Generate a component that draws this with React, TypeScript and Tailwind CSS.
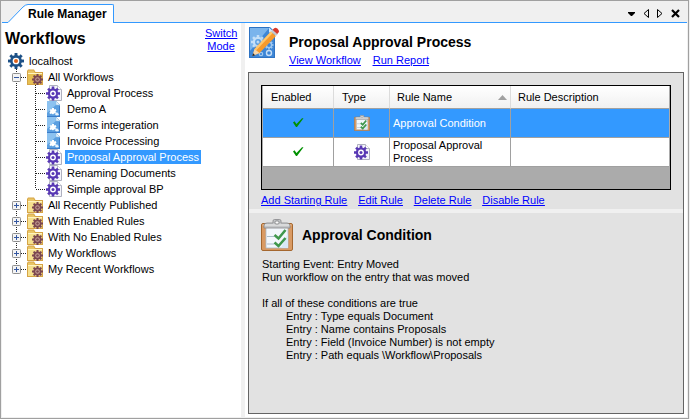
import { useState, type ReactNode } from "react";

const TEETH = [0, 45, 90, 135, 180, 225, 270, 315];

function Gear({ cx, cy, r, color, hub }: { cx: number; cy: number; r: number; color: string; hub: string }) {
  return (
    <g>
      {TEETH.map((a) => (
        <rect key={a} x={cx - r * 0.18} y={cy - r} width={r * 0.36} height={r * 0.5} fill={color} transform={`rotate(${a} ${cx} ${cy})`} />
      ))}
      <circle cx={cx} cy={cy} r={r * 0.58} fill={hub} stroke={color} strokeWidth={r * 0.32} />
    </g>
  );
}

function HostIcon() {
  return (
    <svg className="h-4 w-4 shrink-0" viewBox="0 0 16 16" aria-hidden="true">
      <Gear cx={8} cy={8} r={8} color="#1d5187" hub="#ffffff" />
      <circle cx="8" cy="8" r="2" fill="#e0641c" />
    </svg>
  );
}

function FolderIcon({ open = false }: { open?: boolean }) {
  return (
    <svg className="h-4 w-4 shrink-0" viewBox="0 0 16 16" aria-hidden="true">
      <path d="M0 16V2L1 .5h6L8.500 3H16v13z" fill="#d6a445" />
      <path d="M1 2l.500-.5h5L8 4h7v1H1z" fill="#e9c566" />
      <path d="M1 5h14v10H1z" fill={open ? "#e6bf52" : "#f5e08e"} />
      <path d="M1 4.500h14" stroke="#fff3bf" />
      <Gear cx={10.5} cy={10.5} r={5.5} color="#7b4650" hub="#c9a59a" />
      <circle cx="10.5" cy="10.5" r="1.300" fill="#7b4650" />
    </svg>
  );
}

function ProcessIcon() {
  return (
    <svg className="h-4 w-4 shrink-0" viewBox="0 0 16 16" aria-hidden="true">
      <path d="M3.500 .5h8l4 4v11h-12z" fill="#f4f4fa" stroke="#aeb0bf" />
      <path d="M11.500 .5v4h4" fill="#ffffff" stroke="#b8bac6" />
      <Gear cx={7} cy={8.5} r={7} color="#5838b4" hub="#ffffff" />
      <circle cx="7" cy="8.5" r="1.500" fill="#5838b4" />
    </svg>
  );
}

function BlueprintIcon() {
  return (
    <svg className="h-4 w-4 shrink-0" viewBox="0 0 16 16" aria-hidden="true">
      <path d="M1 0h9l4 4v12H1z" fill="#5b9fe0" />
      <path d="M1 0h9l1 3-10 9z" fill="#8cc2f0" />
      <path d="M10 0v4h4z" fill="#e6f2fc" stroke="#8bb8e0" strokeWidth="0.5" />
      <path d="M1 15.500h13M13.500 5v11" stroke="#3a7cca" />
      <path d="M6 7h2v1.500l1.500-.5 1 1.500L9.500 10.500l.5 1.500-2 .5-1 1-1.500-1L4 13l-.5-1.500 1-1.500-1-1L5 8l1 .5z" fill="#ffffff" />
      <path d="M10 11.500h1.500l.5 1 1 .5-.5 1-1.500.5-1.500-.5-.5-1z" fill="#e8f3fd" />
    </svg>
  );
}

function ClipboardIcon({ small = false }: { small?: boolean }) {
  return (
    <svg className={small ? "h-4 w-4" : "h-8 w-8 shrink-0"} viewBox="0 0 32 32" aria-hidden="true">
      <rect x="0.500" y="4.500" width="31" height="27" rx="1.500" fill="#d99a63" stroke="#a5672f" />
      <path d="M1.500 6h29" stroke="#efc49b" />
      <path d="M5 8h22v21H5z" fill="#f2f7fc" stroke="#a9b9c8" strokeWidth="0.800" />
      <path d="M20 29h7V14z" fill="#d8e9f6" />
      <path d="M3 9V6.500Q3 4 6 4h6V2q0-1.500 1.500-1.500h5q1.500 0 1.500 1.500v2h6q3 0 3 2.500V9z" fill="#c4c6c8" stroke="#858789" strokeWidth="0.800" />
      <path d="M4 6h24" stroke="#eeeeee" />
      <rect x="14" y="2" width="4" height="3" rx="1" fill="#fafafa" stroke="#77797b" strokeWidth="0.800" />
      <path d="M6 17.500h7M6 25h7" stroke="#a9bccb" strokeWidth="1.200" />
      <path d="M13.500 16l4 3.500 7-8.500M13.500 23.500l4 3.500 7-8" fill="none" stroke="#3f974c" strokeWidth={small ? 3.5 : 2.6} />
    </svg>
  );
}

function WorkflowIcon() {
  return (
    <svg className="h-9 w-8 shrink-0" viewBox="0 0 32 36" aria-hidden="true">
      <path d="M1 3h21l5 5v26H1z" fill="#3d86d6" />
      <path d="M1.500 3.500h20l-20 24z" fill="#7ab4ec" />
      <path d="M1.500 3.500H21l5.500 5v25h-25z" fill="none" stroke="#2f73c2" />
      <path d="M21 3.500v5h5.500z" fill="#d3e8fa" />
      <g opacity="0.800">
        <Gear cx={10} cy={18} r={7} color="#d9ecfb" hub="#5a9fe2" />
        <circle cx="10" cy="18" r="1.500" fill="#d9ecfb" />
        <Gear cx={21} cy={21} r={4.5} color="#b7d9f7" hub="#3d86d6" />
        <circle cx="21" cy="29" r="2.500" fill="none" stroke="#e9f4fd" strokeWidth="1.400" />
        <circle cx="13" cy="30" r="1.700" fill="none" stroke="#b7d9f7" strokeWidth="1.200" />
      </g>
      <path d="M4.500 32l2-7L23 7.500l5 4.500L11.500 29z" fill="#f79a2c" />
      <path d="M6.500 25L23 7.500l1.800 1.600L8 26.500z" fill="#ffc76d" />
      <path d="M4.500 32l2-7 5 4z" fill="#f5d6ab" />
      <path d="M4.300 32.200l.8-3 2 2z" fill="#222222" />
      <path d="M23 7.500l1.800-2 5 4.500-1.800 2z" fill="#c3c9cf" />
      <path d="M24.500 5.800l1.700-1.600q1.500-1 3 .3l1.200 1.200q1.300 1.500.1 2.900l-1.300 1.400z" fill="#d9382a" />
    </svg>
  );
}

function CheckMark() {
  return (
    <svg className="h-3 w-3" viewBox="0 0 12 12" role="img" aria-label="Enabled">
      <path d="M1 5.500l1.500-1.200L4.500 7 10 1.200h1.500L5 10H4z" fill="#009000" />
    </svg>
  );
}

/* Dotted connector that leads from one trunk line to a leaf. */
function LeafGuide({ last }: { last?: boolean }) {
  return (
    <svg className="h-4 w-[39px] shrink-0" viewBox="0 0 39 16" stroke="#202020" strokeDasharray="1 1" aria-hidden="true">
      <path d="M9.500 0v16" />
      <path d={last ? "M28.500 0v8" : "M28.500 0v16"} />
      <path d="M29 8.500h10" />
    </svg>
  );
}

function Branch({ label, last, children }: { label: string; last?: boolean; children?: ReactNode }) {
  const [open, setOpen] = useState(Boolean(children));
  return (
    <li>
      <div className="flex h-4 items-center">
        <button type="button" className="h-4 w-5 shrink-0" aria-expanded={open} aria-label={`Toggle ${label}`} onClick={() => setOpen(!open)}>
          <svg className="block h-4 w-5" viewBox="0 0 20 16" aria-hidden="true">
            <path d={last ? "M9.500 0v4" : "M9.500 0v16"} stroke="#202020" strokeDasharray="1 1" />
            <path d="M14 8.500h6" stroke="#202020" strokeDasharray="1 1" />
            <rect x="5.500" y="4.500" width="8" height="8" rx="0.800" fill="#f4f4f4" stroke="#8f8f8f" />
            <path d="M7 8.500h5" stroke="#3457a0" />
            {!open && <path d="M9.500 6v5" stroke="#3457a0" />}
          </svg>
        </button>
        <FolderIcon open={open} />
        <span className="pl-[5px]">{label}</span>
      </div>
      {open && children}
    </li>
  );
}

const workflows = [
  { name: "Approval Process", published: true },
  { name: "Demo A", published: false },
  { name: "Forms integeration", published: false },
  { name: "Invoice Processing", published: false },
  { name: "Proposal Approval Process", published: true },
  { name: "Renaming Documents", published: true },
  { name: "Simple approval BP", published: true },
];

function Sidebar() {
  const [selected, setSelected] = useState("Proposal Approval Process");
  return (
    <aside className="w-[239px] shrink-0 bg-white">
      <div className="flex h-[30px] items-start justify-between pr-1 pl-[3px]">
        <h1 className="pt-1.5 text-[16px] leading-5 font-bold">Workflows</h1>
        <a href="#mode" className="w-8 pt-1 text-center text-[#0000ff] underline">
          Switch Mode
        </a>
      </div>
      <div className="pl-[5px]">
        <div className="flex h-4 items-center gap-[5px] pl-px">
          <HostIcon />
          <span>localhost</span>
        </div>
        <ul>
          <Branch label="All Workflows">
            <ul>
              {workflows.map((w, i) => (
                <li key={w.name} className="flex h-4 items-center">
                  <LeafGuide last={i === workflows.length - 1} />
                  {w.published ? <ProcessIcon /> : <BlueprintIcon />}
                  <button
                    type="button"
                    onClick={() => setSelected(w.name)}
                    className={`ml-[3px] h-[14px] px-0.5 leading-[14px] ${selected === w.name ? "bg-[#3399ff] text-white" : ""}`}
                  >
                    {w.name}
                  </button>
                </li>
              ))}
            </ul>
          </Branch>
          <Branch label="All Recently Published" />
          <Branch label="With Enabled Rules" />
          <Branch label="With No Enabled Rules" />
          <Branch label="My Workflows" />
          <Branch label="My Recent Workflows" last />
        </ul>
      </div>
    </aside>
  );
}

function TitleBar() {
  return (
    <header className="flex h-[22px] shrink-0 items-stretch bg-[#f0f0f0]">
      <span className="w-1.5 border-b border-[#3399ff]" />
      <div className="flex pt-[3px]">
        <svg className="h-[19px] w-5" viewBox="0 0 20 19" aria-hidden="true">
          <path d="M0 18.500L15 3Q17.500 .5 20 .5V19H0z" fill="#ffffff" />
          <path d="M0 18.500L15 3Q17.500 .5 20 .5" fill="none" stroke="#3399ff" />
        </svg>
        <button type="button" className="rounded-tr-[2px] border-t border-r border-[#3399ff] bg-white pr-1.5 text-[12px] font-bold">
          Rule Manager
        </button>
      </div>
      <div className="flex flex-1 items-center justify-end gap-2 border-b border-[#3399ff] pt-1 pr-[7px]">
        <button type="button" aria-label="Window list">
          <svg className="h-[9px] w-[7px]" viewBox="0 0 7 9" aria-hidden="true">
            <path d="M0 3h7v1L4 7H3L0 4z" />
          </svg>
        </button>
        <button type="button" aria-label="Previous tab">
          <svg className="h-[9px] w-1.5" viewBox="0 0 6 9" aria-hidden="true">
            <path d="M5.500 .5v8L1 4.500z" fill="none" stroke="#000000" />
          </svg>
        </button>
        <button type="button" aria-label="Next tab">
          <svg className="h-[9px] w-1.5" viewBox="0 0 6 9" aria-hidden="true">
            <path d="M.5 .5v8L5 4.500z" fill="none" stroke="#000000" />
          </svg>
        </button>
        <button type="button" aria-label="Close">
          <svg className="h-[9px] w-[9px]" viewBox="0 0 9 9" aria-hidden="true">
            <path d="M1 1l7 7M8 1L1 8" stroke="#000000" strokeWidth="2.200" />
          </svg>
        </button>
      </div>
    </header>
  );
}

function RulesTable() {
  return (
    <div className="border border-black bg-[#ababab] px-px pb-[22px]">
      <table className="w-full table-fixed border-separate border-spacing-0 text-left">
        <colgroup>
          <col className="w-[71px]" />
          <col className="w-14" />
          <col className="w-[121px]" />
          <col />
        </colgroup>
        <thead>
          <tr className="h-[23px] bg-linear-to-b from-white to-[#f0f0f0]">
            <th className="border-r border-b border-r-[#dcdcdc] border-b-[#a0a0a0] pl-2 font-normal">Enabled</th>
            <th className="border-r border-b border-r-[#dcdcdc] border-b-[#a0a0a0] pl-2 font-normal">Type</th>
            <th className="border-r border-b border-r-[#dcdcdc] border-b-[#a0a0a0] pl-[7px] font-normal">
              <div className="flex items-center justify-between pr-[3px]">
                Rule Name
                <svg className="h-[5px] w-[9px]" viewBox="0 0 9 5" aria-hidden="true">
                  <path d="M0 5L4.500 0 9 5z" fill="#a0a0a0" />
                </svg>
              </div>
            </th>
            <th className="border-b border-b-[#a0a0a0] pl-[7px] font-normal">Rule Description</th>
          </tr>
        </thead>
        <tbody>
          <tr className="h-[29px] bg-[#3399ff] text-white">
            <td className="border-r border-b border-[#a0a0a0]"><div className="flex justify-center"><CheckMark /></div></td>
            <td className="border-r border-b border-[#a0a0a0]"><div className="flex justify-center"><ClipboardIcon small /></div></td>
            <td className="border-r border-b border-[#a0a0a0] pl-[3px]">Approval Condition</td>
            <td className="border-b border-[#a0a0a0]" />
          </tr>
          <tr className="h-[29px] bg-white">
            <td className="border-r border-b border-[#a0a0a0]"><div className="flex justify-center"><CheckMark /></div></td>
            <td className="border-r border-b border-[#a0a0a0]"><div className="flex justify-center"><ProcessIcon /></div></td>
            <td className="border-r border-b border-[#a0a0a0] pr-3 pl-[3px]">Proposal Approval Process</td>
            <td className="border-b border-[#a0a0a0]" />
          </tr>
        </tbody>
      </table>
    </div>
  );
}

export default function App() {
  return (
    <div className="min-h-screen bg-[#f0f0f0] pr-px font-['Liberation_Sans',Arial,sans-serif] text-[11px] leading-[13px] text-black">
      <div className="flex min-h-screen flex-col border border-[#a0a0a0] px-px pb-px">
        <TitleBar />
        <div className="flex flex-1">
          <Sidebar />
          <div className="w-1 shrink-0 bg-[#f0f0f0]" />
          <main className="flex min-w-0 flex-1 flex-col bg-white px-[3px] pb-[3px]">
            <div className="flex h-[49px] shrink-0 gap-[9px] pt-px">
              <WorkflowIcon />
              <div className="pt-2">
                <h2 className="text-[14px] leading-5 font-bold">Proposal Approval Process</h2>
                <nav className="flex gap-3 pt-0.5 text-[#0000ff] underline">
                  <a href="#view">View Workflow</a>
                  <a href="#report">Run Report</a>
                </nav>
              </div>
            </div>
            <div className="flex flex-1 flex-col border border-[#646464] bg-[#e2e2e2]">
              <section className="px-3 pt-3 pb-0.5">
                <RulesTable />
                <nav className="flex gap-[11px] pt-1 text-[#0000ff] underline">
                  <a href="#add">Add Starting Rule</a>
                  <a href="#edit">Edit Rule</a>
                  <a href="#delete">Delete Rule</a>
                  <a href="#disable">Disable Rule</a>
                </nav>
              </section>
              <div className="h-1 bg-[#f0f0f0]" />
              <section className="px-3 pt-1.5">
                <div className="flex items-center gap-[9px]">
                  <ClipboardIcon />
                  <h3 className="text-[14px] leading-5 font-bold">Approval Condition</h3>
                </div>
                <div className="pt-[7px] pl-px">
                  <p>Starting Event: Entry Moved</p>
                  <p>Run workflow on the entry that was moved</p>
                  <p className="pt-[13px]">If all of these conditions are true</p>
                  <ul className="pl-6">
                    <li>Entry : Type equals Document</li>
                    <li>Entry : Name contains Proposals</li>
                    <li>Entry : Field (Invoice Number) is not empty</li>
                    <li>Entry : Path equals \Workflow\Proposals</li>
                  </ul>
                </div>
              </section>
            </div>
          </main>
        </div>
      </div>
    </div>
  );
}
